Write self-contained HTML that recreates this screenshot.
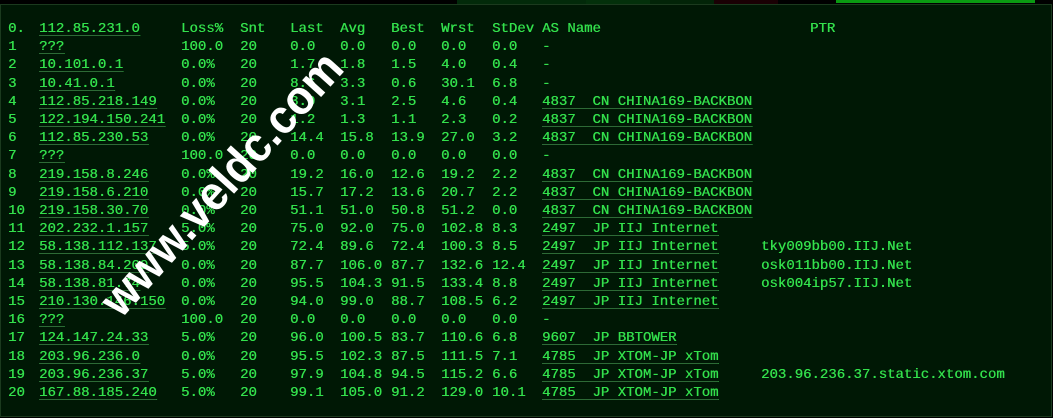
<!DOCTYPE html>
<html><head><meta charset="utf-8">
<style>
html,body{margin:0;padding:0;}
body{width:1053px;height:418px;background:#000;position:relative;overflow:hidden;font-family:"Liberation Mono",monospace;font-size:14px;color:#33e04c;}
.frame{position:absolute;left:0;top:4px;width:1050px;height:411px;background:#001805;border:1px solid #1b3a1e;}
.r{position:absolute;left:0;height:18px;line-height:18px;white-space:pre;text-shadow:0.35px 0 0 #33e04c;top:0;}
.r span{position:absolute;top:1px;}
.u{text-decoration:underline;text-decoration-color:#2d6a36;text-underline-offset:3px;}
.c0{left:8px}.c1{left:39px}.c2{left:181px}.c3{left:240px}.c4{left:290px}.c5{left:340px}.c6{left:391px}.c7{left:441px}.c8{left:492px}.c9{left:542px}.c10{left:761px}
</style></head><body>
<div style="position:absolute;left:457px;top:0;width:129px;height:4px;background:#022a0a"></div>
<div style="position:absolute;left:586px;top:0;width:64px;height:4px;background:#03300b"></div>
<div style="position:absolute;left:650px;top:0;width:64px;height:4px;background:#022408"></div>
<div style="position:absolute;left:714px;top:0;width:64px;height:4px;background:#1a0004"></div>
<div style="position:absolute;left:836px;top:0;width:199px;height:3px;background:#0a9a12"></div>
<div class="frame"></div>

<div class="r" style="top:19px"><span class="c0">0.</span><span class="c1 u">112.85.231.0</span><span class="c2">Loss%</span><span class="c3">Snt</span><span class="c4">Last</span><span class="c5">Avg</span><span class="c6">Best</span><span class="c7">Wrst</span><span class="c8">StDev</span><span class="c9">AS Name</span><span style="left:810px">PTR</span></div>
<div class="r" style="top:37px"><span class="c0">1</span><span class="c1 u">???</span><span class="c2">100.0</span><span class="c3">20</span><span class="c4">0.0</span><span class="c5">0.0</span><span class="c6">0.0</span><span class="c7">0.0</span><span class="c8">0.0</span><span class="c9">-</span></div>
<div class="r" style="top:55px"><span class="c0">2</span><span class="c1 u">10.101.0.1</span><span class="c2">0.0%</span><span class="c3">20</span><span class="c4">1.7</span><span class="c5">1.8</span><span class="c6">1.5</span><span class="c7">4.0</span><span class="c8">0.4</span><span class="c9">-</span></div>
<div class="r" style="top:74px"><span class="c0">3</span><span class="c1 u">10.41.0.1</span><span class="c2">0.0%</span><span class="c3">20</span><span class="c4">8.6</span><span class="c5">3.3</span><span class="c6">0.6</span><span class="c7">30.1</span><span class="c8">6.8</span><span class="c9">-</span></div>
<div class="r" style="top:92px"><span class="c0">4</span><span class="c1 u">112.85.218.149</span><span class="c2">0.0%</span><span class="c3">20</span><span class="c4">3.0</span><span class="c5">3.1</span><span class="c6">2.5</span><span class="c7">4.6</span><span class="c8">0.4</span><span class="c9 u">4837  CN CHINA169-BACKBON</span></div>
<div class="r" style="top:110px"><span class="c0">5</span><span class="c1 u">122.194.150.241</span><span class="c2">0.0%</span><span class="c3">20</span><span class="c4">1.2</span><span class="c5">1.3</span><span class="c6">1.1</span><span class="c7">2.3</span><span class="c8">0.2</span><span class="c9 u">4837  CN CHINA169-BACKBON</span></div>
<div class="r" style="top:128px"><span class="c0">6</span><span class="c1 u">112.85.230.53</span><span class="c2">0.0%</span><span class="c3">20</span><span class="c4">14.4</span><span class="c5">15.8</span><span class="c6">13.9</span><span class="c7">27.0</span><span class="c8">3.2</span><span class="c9 u">4837  CN CHINA169-BACKBON</span></div>
<div class="r" style="top:146px"><span class="c0">7</span><span class="c1 u">???</span><span class="c2">100.0</span><span class="c3">20</span><span class="c4">0.0</span><span class="c5">0.0</span><span class="c6">0.0</span><span class="c7">0.0</span><span class="c8">0.0</span><span class="c9">-</span></div>
<div class="r" style="top:165px"><span class="c0">8</span><span class="c1 u">219.158.8.246</span><span class="c2">0.0%</span><span class="c3">20</span><span class="c4">19.2</span><span class="c5">16.0</span><span class="c6">12.6</span><span class="c7">19.2</span><span class="c8">2.2</span><span class="c9 u">4837  CN CHINA169-BACKBON</span></div>
<div class="r" style="top:183px"><span class="c0">9</span><span class="c1 u">219.158.6.210</span><span class="c2">0.0%</span><span class="c3">20</span><span class="c4">15.7</span><span class="c5">17.2</span><span class="c6">13.6</span><span class="c7">20.7</span><span class="c8">2.2</span><span class="c9 u">4837  CN CHINA169-BACKBON</span></div>
<div class="r" style="top:201px"><span class="c0">10</span><span class="c1 u">219.158.30.70</span><span class="c2">0.0%</span><span class="c3">20</span><span class="c4">51.1</span><span class="c5">51.0</span><span class="c6">50.8</span><span class="c7">51.2</span><span class="c8">0.0</span><span class="c9 u">4837  CN CHINA169-BACKBON</span></div>
<div class="r" style="top:219px"><span class="c0">11</span><span class="c1 u">202.232.1.157</span><span class="c2">5.0%</span><span class="c3">20</span><span class="c4">75.0</span><span class="c5">92.0</span><span class="c6">75.0</span><span class="c7">102.8</span><span class="c8">8.3</span><span class="c9 u">2497  JP IIJ Internet</span></div>
<div class="r" style="top:237px"><span class="c0">12</span><span class="c1 u">58.138.112.137</span><span class="c2">5.0%</span><span class="c3">20</span><span class="c4">72.4</span><span class="c5">89.6</span><span class="c6">72.4</span><span class="c7">100.3</span><span class="c8">8.5</span><span class="c9 u">2497  JP IIJ Internet</span><span class="c10">tky009bb00.IIJ.Net</span></div>
<div class="r" style="top:256px"><span class="c0">13</span><span class="c1 u">58.138.84.209</span><span class="c2">0.0%</span><span class="c3">20</span><span class="c4">87.7</span><span class="c5">106.0</span><span class="c6">87.7</span><span class="c7">132.6</span><span class="c8">12.4</span><span class="c9 u">2497  JP IIJ Internet</span><span class="c10">osk011bb00.IIJ.Net</span></div>
<div class="r" style="top:274px"><span class="c0">14</span><span class="c1 u">58.138.81.74</span><span class="c2">0.0%</span><span class="c3">20</span><span class="c4">95.5</span><span class="c5">104.3</span><span class="c6">91.5</span><span class="c7">133.4</span><span class="c8">8.8</span><span class="c9 u">2497  JP IIJ Internet</span><span class="c10">osk004ip57.IIJ.Net</span></div>
<div class="r" style="top:292px"><span class="c0">15</span><span class="c1 u">210.130.146.150</span><span class="c2">0.0%</span><span class="c3">20</span><span class="c4">94.0</span><span class="c5">99.0</span><span class="c6">88.7</span><span class="c7">108.5</span><span class="c8">6.2</span><span class="c9 u">2497  JP IIJ Internet</span></div>
<div class="r" style="top:310px"><span class="c0">16</span><span class="c1 u">???</span><span class="c2">100.0</span><span class="c3">20</span><span class="c4">0.0</span><span class="c5">0.0</span><span class="c6">0.0</span><span class="c7">0.0</span><span class="c8">0.0</span><span class="c9">-</span></div>
<div class="r" style="top:328px"><span class="c0">17</span><span class="c1 u">124.147.24.33</span><span class="c2">5.0%</span><span class="c3">20</span><span class="c4">96.0</span><span class="c5">100.5</span><span class="c6">83.7</span><span class="c7">110.6</span><span class="c8">6.8</span><span class="c9 u">9607  JP BBTOWER</span></div>
<div class="r" style="top:347px"><span class="c0">18</span><span class="c1 u">203.96.236.0</span><span class="c2">0.0%</span><span class="c3">20</span><span class="c4">95.5</span><span class="c5">102.3</span><span class="c6">87.5</span><span class="c7">111.5</span><span class="c8">7.1</span><span class="c9 u">4785  JP XTOM-JP xTom</span></div>
<div class="r" style="top:365px"><span class="c0">19</span><span class="c1 u">203.96.236.37</span><span class="c2">5.0%</span><span class="c3">20</span><span class="c4">97.9</span><span class="c5">104.8</span><span class="c6">94.5</span><span class="c7">115.2</span><span class="c8">6.6</span><span class="c9 u">4785  JP XTOM-JP xTom</span><span class="c10">203.96.236.37.static.xtom.com</span></div>
<div class="r" style="top:383px"><span class="c0">20</span><span class="c1 u">167.88.185.240</span><span class="c2">5.0%</span><span class="c3">20</span><span class="c4">99.1</span><span class="c5">105.0</span><span class="c6">91.2</span><span class="c7">129.0</span><span class="c8">10.1</span><span class="c9 u">4785  JP XTOM-JP xTom</span></div>

<svg style="position:absolute;left:0;top:0" width="1053" height="418">
<text x="0" y="0" transform="translate(224,186) rotate(-48)" text-anchor="middle" dominant-baseline="middle" font-family="Liberation Sans, sans-serif" font-weight="bold" font-size="48" fill="#fff" textLength="336" lengthAdjust="spacingAndGlyphs">www.veldc.com</text>
</svg>
</body></html>
